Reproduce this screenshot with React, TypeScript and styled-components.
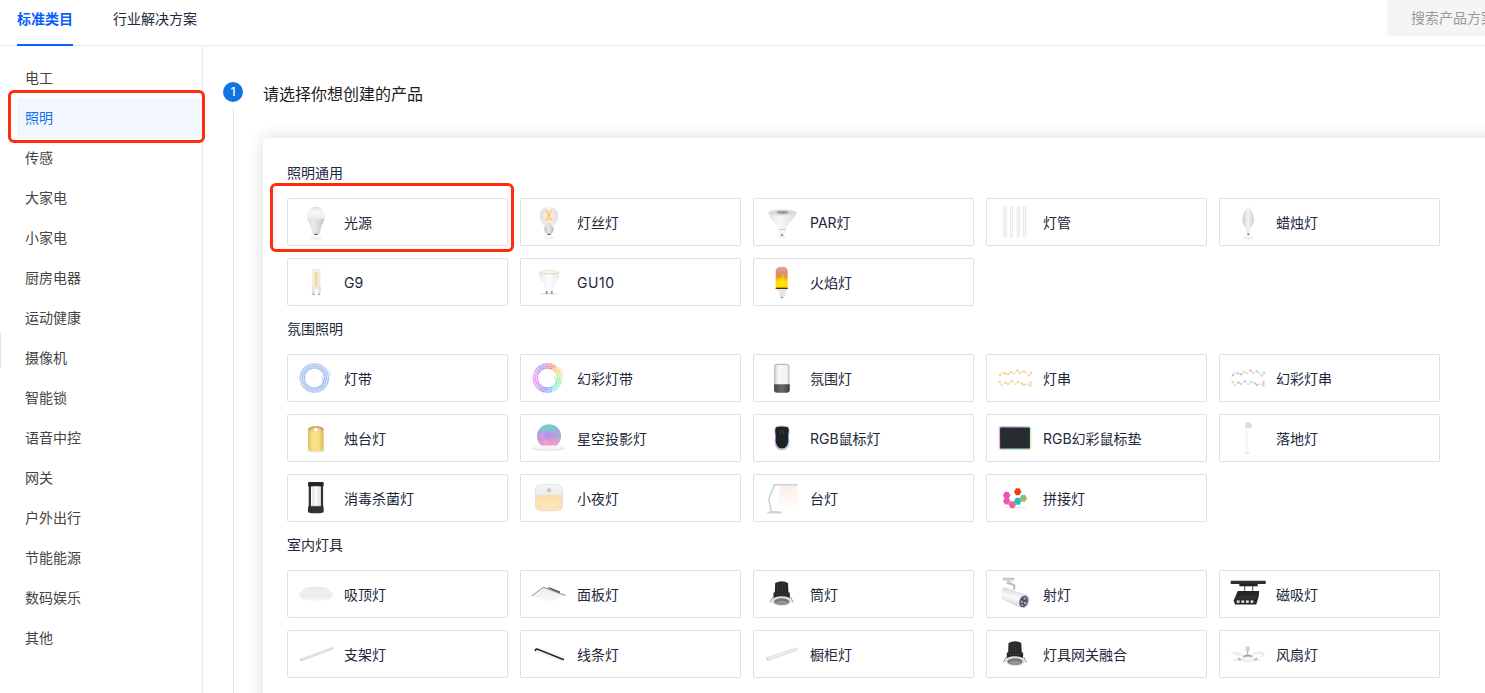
import React from "react";
import styled, { createGlobalStyle, css } from "styled-components";

const GlobalStyle = createGlobalStyle`
  * { box-sizing: border-box; }
  html, body { margin: 0; height: 100%; overflow: hidden; }
  body {
    background: #fff;
    color: #20283a;
    font-family: Inter, "Noto Sans CJK SC", sans-serif;
    font-size: 14px;
    line-height: 22px;
  }
`;

const Page = styled.div`
  position: relative;
  display: flex;
  flex-direction: column;
  height: 693px;
  overflow: hidden;
`;

const Header = styled.header`
  display: flex;
  justify-content: space-between;
  flex: none;
  height: 46px;
  padding-left: 17px;
  border-bottom: 1px solid #ebebeb;
`;

const Tabs = styled.nav`
  display: flex;
  gap: 40px;
`;

const Tab = styled.a<{ $active?: boolean }>`
  height: 46px;
  padding-top: 8px;
  white-space: nowrap;
  ${(p) =>
    p.$active &&
    css`
      color: #0a5cff;
      font-weight: 700;
      border-bottom: 2px solid #0a5cff;
    `}
`;

const Search = styled.div`
  width: 98px;
  height: 36px;
  padding: 7px 0 0 24px;
  overflow: hidden;
  white-space: nowrap;
  color: #999;
  background: #f5f5f5;
  border-bottom-left-radius: 3px;
`;

const Body = styled.div`
  display: flex;
  flex: 1;
  min-height: 0;
`;

const Sidebar = styled.aside`
  flex: none;
  width: 203px;
  padding: 12px 0 0 17px;
  border-right: 1px solid #e9e9eb;
`;

const Category = styled.div<{ $active?: boolean }>`
  position: relative;
  height: 40px;
  padding-left: 8px;
  line-height: 40px;
  color: ${(p) => (p.$active ? "#1274e7" : "#444")};
  background: ${(p) => (p.$active ? "#f1f6ff" : "transparent")};
`;

const Marker = styled.span<{ $inset: string }>`
  position: absolute;
  inset: ${(p) => p.$inset};
  z-index: 2;
  border: 3px solid #ff2b0a;
  border-radius: 6px;
  pointer-events: none;
`;

const DrawerHandle = styled.span`
  position: absolute;
  left: 0;
  top: 332px;
  width: 1px;
  height: 36px;
  background: #e4e5ee;
`;

const Main = styled.main`
  display: flex;
  flex: 1;
  min-width: 0;
  padding: 36px 0 0 20px;
`;

const StepRail = styled.div`
  display: flex;
  flex-direction: column;
  align-items: center;
  gap: 6px;
  flex: none;
  width: 20px;
  margin-right: 20px;
`;

const StepNumber = styled.span`
  flex: none;
  width: 20px;
  height: 20px;
  border-radius: 50%;
  color: #fff;
  background: #1273e6;
  font-size: 12px;
  font-weight: 500;
  line-height: 20px;
  text-align: center;
`;

const StepLine = styled.span`
  flex: 1;
  width: 1px;
  margin-left: 1px;
  background: #e6e6e8;
`;

const StepContent = styled.div`
  flex: none;
  width: 1240px;
`;

const StepTitle = styled.h1`
  margin: 0 0 32px;
  font-size: 16px;
  font-weight: 400;
  line-height: 24px;
  color: #1c1c1e;
`;

const Panel = styled.section`
  height: 640px;
  padding: 24px;
  border-radius: 4px;
  background: #fff;
  box-shadow: 0 0 16px rgba(0, 0, 0, 0.15);
`;

const Group = styled.div`
  & + & {
    margin-top: 12px;
  }
`;

const GroupTitle = styled.h2`
  margin: 0 0 14px;
  font-size: 14px;
  font-weight: 400;
  line-height: 22px;
`;

const Grid = styled.div`
  display: grid;
  grid-template-columns: repeat(5, 221px);
  grid-auto-rows: 48px;
  gap: 12px;
`;

const Card = styled.div`
  position: relative;
  display: flex;
  align-items: center;
  gap: 10px;
  padding: 0 10px;
  border: 1px solid #dfe0e3;
  border-radius: 2px;
  white-space: nowrap;
`;

const CardLabel = styled.span<{ $spaced?: boolean }>`
  padding-top: 1px;
  letter-spacing: ${(p) => (p.$spaced ? "0.6px" : "normal")};
`;

const Picture = styled.svg`
  flex: none;
  width: 36px;
  height: 36px;
  overflow: visible;
`;

type Stops = [number, string][];
const Gradient = ({ id, stops, x2 = 0, y2 = 1 }: { id: string; stops: Stops; x2?: number; y2?: number }) => (
  <linearGradient id={id} x1="0" y1="0" x2={x2} y2={y2}>
    {stops.map(([o, c]) => (
      <stop key={o} offset={o} stopColor={c} />
    ))}
  </linearGradient>
);

const Bulb = () => (
  <>
    <Gradient id="bulb" x2={1} y2={0} stops={[[0, "#dcdcdc"], [0.35, "#e9e9e9"], [0.7, "#d6d6d6"], [1, "#c0c0c0"]]} />
    <Gradient id="bulbTop" stops={[[0, "#dedede"], [0.45, "#f8f8f8"], [1, "#e8e8e8"]]} />
    <ellipse cx="18" cy="34" rx="6" ry="1.8" fill="#f1f1f1" />
    <path d="M9.200 14C9.800 18.500 13.500 21 13.900 28.500L15.500 30h5l1.600-1.500C22.500 21 26.200 18.500 26.800 14Z" fill="url(#bulb)" />
    <path d="M9.200 15C8 7.500 12.500 2.700 18 2.700S28 7.500 26.800 15Q18 15.600 9.200 15Z" fill="url(#bulbTop)" />
    <path d="M15.800 29.700h4.400l-.8 1.400h-2.800z" fill="#6d6d6d" />
  </>
);

const Filament = () => (
  <>
    <Gradient id="glass" x2={1} y2={0} stops={[[0, "#e3ddd8"], [0.5, "#fbf5ec"], [1, "#e3dedb"]]} />
    <Gradient id="filBase" x2={1} y2={0} stops={[[0, "#bcbcbc"], [0.45, "#e9e9e9"], [1, "#b8b8b8"]]} />
    <ellipse cx="18" cy="34" rx="6" ry="1.500" fill="#f3f3f3" />
    <path d="M8.800 12C8.800 6.200 12.500 2.700 18 2.700s9.200 3.500 9.200 9.300c0 5.500-4.200 8-5 13H13.800C13 20 8.800 17.500 8.800 12Z" fill="url(#glass)" />
    <path d="M15.800 18h3.600l1 4 2.300 1.700-.5 4L20.300 30h-4.600l-1.900-2.300-.5-4 2.300-1.700z" fill="url(#filBase)" />
    <path d="m14.300 5.500 7 11.500m0-11.500-7 11.500M16.700 6.500l.4 10M19.300 6.500l-.5 10" stroke="#f5cc7c" strokeWidth="1.300" fill="none" />
    <path d="M16 29.700h4l-.6 1.300h-2.800z" fill="#666" />
  </>
);

const Par = () => (
  <>
    <Gradient id="par" x2={1} y2={0} stops={[[0, "#e2e2e2"], [0.4, "#f8f8f8"], [1, "#dedede"]]} />
    <ellipse cx="18" cy="32.800" rx="4" ry="1.400" fill="#f0f0f0" />
    <path d="M4.300 9C6.500 16 13 19 14.500 25v4l2 2h3l2-2v-4C23.500 19 30.500 16 32.700 9Z" fill="url(#par)" />
    <ellipse cx="18.500" cy="8.500" rx="14.200" ry="2.900" fill="#dadada" />
    <ellipse cx="18.500" cy="8.300" rx="6" ry="1.600" fill="#9b9b9b" />
    <path d="M14.500 25.500h7" stroke="#cfcfcf" />
    <path d="M16.500 30.300h3l-.7 1.700h-1.600z" fill="#8c8c8c" />
  </>
);

const Tubes = () => (
  <>
    <Gradient id="tube" x2={1} y2={0} stops={[[0, "#dcdcdc"], [0.45, "#fafafa"], [1, "#dfdfdf"]]} />
    {[6.600, 13, 19.800, 26.100].map((x) => (
      <rect key={x} x={x} y="1.700" width="2.900" height="32" rx="1.200" fill="url(#tube)" />
    ))}
  </>
);

const CandleBulb = () => (
  <>
    <Gradient id="candle" x2={1} y2={0} stops={[[0, "#cfcfcf"], [0.5, "#f4f4f4"], [1, "#cdcdcd"]]} />
    <ellipse cx="18" cy="34" rx="4.500" ry="1.500" fill="#efefef" />
    <path d="M18.300 2.700C15.500 5 12.300 10.500 12.300 15.500c0 4 2 6.500 3.500 9l.8 5h3.200l.7-5c1.500-2.500 3.500-5 3.500-9 0-5-3-10.500-5.700-12.800Z" fill="url(#candle)" />
    <path d="M17 29.500h2.600L19 31.300h-1.200z" fill="#777" />
  </>
);

const G9 = () => (
  <>
    <rect x="14.700" y="5.300" width="7.300" height="17" rx="0.500" fill="#eee" stroke="#dedede" strokeWidth="0.500" />
    <rect x="16.400" y="7.600" width="3.900" height="14" fill="#fbe9be" />
    <path d="M18.300 8v14" stroke="#f5cd7a" strokeWidth="2.200" strokeDasharray="1.300 .8" />
    <path d="M13.200 22.300h10.200L22.600 30h-8.200z" fill="#e6e6e6" />
    <path d="M17 25h3v5.200h-3z" fill="#fff" />
    <path d="M14.500 29.500q0 1.500 2 1M22 29.500q0 1.500-2 1" stroke="#888" fill="none" />
  </>
);

const Gu10 = () => (
  <>
    <Gradient id="gu" x2={1} y2={0} stops={[[0, "#ececec"], [0.5, "#fcfcfc"], [1, "#e9e9e9"]]} />
    <ellipse cx="18" cy="30" rx="10" ry="1" fill="#ececec" />
    <path d="M7.700 9C8 14 10 17.500 13 19v6.500q5 2 10.600 0V19c3-1.500 4.600-5 4.900-10Z" fill="url(#gu)" />
    <ellipse cx="18.100" cy="8.300" rx="10.400" ry="2.300" fill="#d6d5d2" />
    <ellipse cx="18.100" cy="8" rx="9.500" ry="1.600" fill="#fdf3dc" />
    <path d="M15.800 27v3M20.700 27v3" stroke="#999" strokeWidth="1.900" />
  </>
);

const Flame = () => (
  <>
    <Gradient id="flame" stops={[[0, "#d9aba4"], [0.3, "#d98d6f"], [0.5, "#ef9a2c"], [0.7, "#ffe100"], [0.92, "#ffd500"], [1, "#f3a300"]]} />
    <path d="M12.500 25h11l-2 3.500v3.500l-2 2h-2l-2.200-2v-3.500z" fill="#e6e6e6" />
    <path d="M11.700 24.500V7q0-4.300 6-4.300t6 4.300v17.500z" fill="url(#flame)" />
    <path d="M13.300 22c-1-5 3-6 2.500-9 1 1.500 1.200 2.500 1.300 3.500.8-2 .8-4.500.4-8 2.500 3 2.200 5.500 2.700 8 .9-1 .6-2 .8-3 1.500 4 2 6 1.200 8.500z" fill="#ffe715" opacity=".6" />
    <path d="M11.700 23.700h12v1.400h-12z" fill="#6d2b08" />
    <path d="M16.500 33h2.600l-.6 1.300h-1.400z" fill="#888" />
  </>
);

const blueRing = ["#8fb2f0"];
const rainbowRing = ["#f5786f", "#f9bd68", "#c5ec8b", "#86eba9", "#7be9d3", "#6fa8f5", "#7f7ff5", "#c985f5", "#f173f2", "#ea88f5", "#9f8af0", "#c27fcb"];
const Ring = ({ colors }: { colors: string[] }) => (
  <>
    {Array.from({ length: 44 }, (_, i) => {
      const a = (i / 44) * Math.PI * 2 - Math.PI / 2;
      const c = colors[Math.floor((i / 44) * colors.length)];
      const at = (r: number, t: number) => `${16.400 + Math.cos(t) * r} ${18 + Math.sin(t) * r}`;
      return (
        <g key={i} stroke={c}>
          <path d={`M${at(9.700, a)}L${at(14.900, a + 0.160)}`} strokeWidth="2" opacity=".28" />
          <path d={`M${at(9.400, a)}L${at(15.400, a + 0.160)}`} strokeWidth="1.100" strokeDasharray="1.200 1" />
        </g>
      );
    })}
    <path d="M25 23.500q.4-4.500-1.500-7.500" stroke={colors[colors.length > 1 ? 4 : 0]} fill="none" opacity=".6" />
    <path d="M32.500 16q-.5-5.500-4.500-9" stroke={colors[colors.length > 1 ? 1 : 0]} fill="none" strokeDasharray="1.500 .8" opacity=".5" />
  </>
);

const AmbientLamp = () => (
  <>
    <Gradient id="amb" x2={1} y2={0} stops={[[0, "#bdbdbd"], [0.25, "#f5f5f5"], [0.8, "#f3f3f3"], [1, "#c2c2c2"]]} />
    <Gradient id="ambBase" x2={1} y2={0} stops={[[0, "#474747"], [0.5, "#6a6a6a"], [1, "#3d3d3d"]]} />
    <rect x="10" y="4" width="15.700" height="28" rx="3" fill="url(#amb)" />
    <path d="M11 5.600q1-1.300 3-1.300h7.700q2 0 3 1.300" stroke="#aaa" fill="none" />
    <path d="M10 24.300h15.700v5.400q0 3-3 3H13q-3 0-3-3z" fill="url(#ambBase)" />
  </>
);

const topString: [number, number][] = [[3, 15], [5, 12.500], [8, 13.300], [11, 14.200], [14, 12], [17, 13.500], [20.500, 10.500], [23, 13], [27, 11.500], [29, 13], [32, 15.500], [34, 12.800]];
const bottomString: [number, number][] = [[2.600, 22], [4.500, 25.500], [8.500, 22.500], [11, 24], [15, 21.200], [18, 24.500], [21, 22], [25, 23.500], [27, 25], [30, 24], [33.500, 25.500], [33.500, 22.500]];
const StringLights = ({ colors }: { colors: string[] }) => (
  <>
    {[topString, bottomString].map((pts, row) => (
      <g key={row}>
        <polyline points={pts.map((p) => p.join(",")).join(" ")} fill="none" stroke="#d9d9dc" strokeWidth=".8" />
        {pts.map(([x, y], i) => (
          <circle key={i} cx={x} cy={y} r={i % 4 === 1 ? 0.700 : 1.200} fill={colors[(i + row) % colors.length]} />
        ))}
      </g>
    ))}
  </>
);

const CandleStand = () => (
  <>
    <Gradient id="wax" x2={1} y2={0} stops={[[0, "#e0bd63"], [0.3, "#fae28a"], [0.7, "#f8dd7c"], [1, "#dab65f"]]} />
    <ellipse cx="18" cy="31" rx="9" ry="1.300" fill="#e8e4d8" />
    <path d="M10 8.500v20.500q0 2 7.800 2t7.900-2V8.500z" fill="url(#wax)" />
    <ellipse cx="17.850" cy="9" rx="7.800" ry="3" fill="#cfa96c" />
    <ellipse cx="17.850" cy="10.200" rx="5.500" ry="2.100" fill="#f0d48a" />
    <path d="M17.800 7q-2.800 3.500-1.200 4.600h2.600q1.500-1.100-1.400-4.600z" fill="#fffdf0" />
  </>
);

const StarSphere = () => (
  <>
    <clipPath id="ballClip"><circle cx="18" cy="16.200" r="12" /></clipPath>
    <Gradient id="ball" x2={0.300} y2={1} stops={[[0, "#8bcfc5"], [0.35, "#8fb1dc"], [0.65, "#c094ea"], [1, "#ee9bc7"]]} />
    <ellipse cx="17.500" cy="28.500" rx="16.200" ry="2.300" fill="#e6e6e6" />
    <ellipse cx="17.500" cy="27" rx="15.500" ry="2.600" fill="#f6f6f6" />
    <g clipPath="url(#ballClip)">
      <path d="M4 3h28v22.500H4z" fill="url(#ball)" />
      <path d="m6 15 10-3-4 7zM18 23l6-6 5 4z" fill="#dd98dc" opacity=".7" />
      <path d="M10 5h14l-6 6-8 1zM20 5l11 9-11-1zM25 16l6 0-5 6z" fill="#74d1c2" opacity=".7" />
      <path d="m13 12 8 2-5 5z" fill="#a896ea" opacity=".7" />
      <path d="m10 22 6-3 4 6z" fill="#f2a4ba" opacity=".8" />
    </g>
  </>
);

const Mouse = () => (
  <>
    <Gradient id="glow" x2={1} y2={0.200} stops={[[0, "#d98ff6"], [0.35, "#ffa3a3"], [0.7, "#ffd08f"], [1, "#9be8d0"]]} />
    <path d="M12 6q6-1.300 12.200 0 1.800 2 1.300 6.500-.6 3-.2 7Q25.200 30 18 30t-7.300-10.500q.4-4-.2-7Q10 8 12 6z" fill="url(#glow)" opacity=".75" />
    <path d="M10.900 20q.3 9.700 7.100 9.700T25.100 20" stroke="#a4a9fb" strokeWidth="1.300" fill="none" opacity=".7" />
    <path d="M12.200 7.200q5.800-1.400 11.700 0 1.300 1.800.7 5.500-.6 3-.2 6.800Q24.300 28.500 18 28.500t-6.400-9q.4-3.800-.2-6.800-.5-3.700.8-5.500z" fill="#1d2226" />
    <path d="M16.300 14.500v-3.300q1.700-1 3.400 0v3.300" stroke="#2f5a34" strokeWidth=".8" fill="none" />
  </>
);

const MousePad = () => (
  <>
    <Gradient id="padGlow" x2={1} y2={0.600} stops={[[0, "#b58cf0"], [0.35, "#e09cc8"], [0.7, "#9ed8d8"], [1, "#a7ee8d"]]} />
    <rect x="1.700" y="6" width="32.600" height="24" rx="2.400" fill="url(#padGlow)" opacity=".5" />
    <rect x="2.300" y="6.600" width="31.400" height="22.900" rx="1.900" fill="url(#padGlow)" opacity=".7" />
    <rect x="3.100" y="7.400" width="29.800" height="21.200" rx="1.200" fill="#262c30" />
  </>
);

const FloorLamp = () => (
  <>
    <path d="M16.800 6v26.500" stroke="#e6e6e6" strokeWidth=".9" />
    <path d="M15 7.500V4q.3-2 3-2 2.500 0 3 2l1 2-4 1.800z" fill="#dedede" />
    <path d="m18 7.800 4-2-.5 1.500-2.500 1z" fill="#eec9a9" />
    <ellipse cx="17" cy="33" rx="3" ry=".8" fill="#e0e0e0" />
  </>
);

const Sterilizer = () => (
  <>
    <Gradient id="uv" x2={1} y2={0} stops={[[0, "#d8d8d8"], [0.5, "#fff"], [1, "#dadada"]]} />
    <rect x="10" y="2" width="15.700" height="4.400" rx="1" fill="#26272a" />
    <path d="M10.700 6h2.300v21h-2.300zM22.800 6h2.300v21h-2.300z" fill="#333" />
    <rect x="14.500" y="6.400" width="6.900" height="20" fill="url(#uv)" />
    <path d="M10.500 26h14.800l.4 2v3.800q-.4 1.500-7.900 1.500T10 31.800V28z" fill="#303133" />
    <path d="M13 26.300h9.800" stroke="#707070" strokeWidth=".8" />
  </>
);

const NightLight = () => (
  <>
    <Gradient id="night" stops={[[0, "#f4f4f4"], [0.4, "#ececec"], [0.405, "#fadfae"], [1, "#fde3b4"]]} />
    <rect x="4" y="4.300" width="28" height="27" rx="6" fill="#dedfe2" />
    <rect x="5" y="5" width="26" height="25.400" rx="5" fill="url(#night)" />
    <ellipse cx="18" cy="24" rx="9" ry="4" fill="#ffebc6" opacity=".4" />
    <circle cx="18" cy="10.300" r="2.200" fill="#cfcfcf" />
    <circle cx="18" cy="10.300" r="1" fill="#bbb" />
  </>
);

const DeskLamp = () => (
  <>
    <Gradient id="beam" stops={[[0, "#fdeee5"], [1, "#fffdfc"]]} />
    <path d="M16.500 5.800H33l2.500 21H12z" fill="url(#beam)" />
    <path d="M9.300 4.800H33.700" stroke="#cbd1d2" strokeWidth="1.600" />
    <path d="M10.300 5 4.800 19l2.400 12.500" stroke="#cdd2d3" strokeWidth="1.600" fill="none" />
    <ellipse cx="10.700" cy="32.300" rx="8" ry="1.300" fill="#cdd1d1" />
  </>
);

const hexes: [number, number, string][] = [[9.700, 15.300, "#ef4db4"], [20.700, 11.700, "#ee3d13"], [9.700, 21, "#ef55b7"], [15.300, 24.700, "#f05f9c"], [20.700, 21.300, "#25bdb7"], [26.300, 18.300, "#90bd73"]];
const HexLights = () => (
  <>
    <ellipse cx="18" cy="27.500" rx="12" ry=".9" fill="#ececec" />
    {hexes.map(([x, y, c]) => (
      <path key={`${x}-${y}`} transform={`translate(${x} ${y})`} d="M-1.700-3.200h3.400L3.500 0 1.700 3.200h-3.400L-3.500 0z" fill={c} stroke={c} strokeWidth=".4" strokeLinejoin="round" />
    ))}
  </>
);

const CeilingLamp = () => (
  <>
    <Gradient id="ceil" stops={[[0, "#ececed"], [0.45, "#f1f1f2"], [0.5, "#e8e9ea"], [1, "#fafafa"]]} />
    <ellipse cx="18" cy="14" rx="13" ry="3.400" fill="#ebebec" />
    <ellipse cx="18" cy="18.700" rx="17" ry="6.800" fill="url(#ceil)" />
  </>
);

const PanelLamp = () => (
  <>
    <Gradient id="pan" stops={[[0, "#ececec"], [1, "#fafafa"]]} />
    <path d="m1 20 11.500-8.500 22 8L19.500 26z" fill="url(#pan)" />
    <path d="M.7 20 12.300 11.300l22.400 8.200" fill="none" stroke="#85827f" strokeWidth=".9" />
    <path d="m16 11.800 3-.4 10 4 0 1.800z" fill="#55524f" />
  </>
);

const Downlight = ({ shift = 0 }: { shift?: number }) => (
  <g transform={`translate(${shift} 0)`}>
    <path d="M9 21 6 26.500M26.500 21l2.800 5.500" stroke="#888" strokeWidth=".9" />
    <path d="M11.200 7q6.500-3.400 12.800 0l.4 9 1.500 1-.2 6H9.600l-.2-6 1.500-1z" fill="#262626" />
    <path d="M13.500 7v9M16 6.500v9.500M18.500 6.500v9.500M21 6.500v9.500" stroke="#444" strokeWidth=".6" />
    <path d="M10 17.500q7.500 1.500 15.500 0" stroke="#444" strokeWidth=".7" fill="none" />
    <ellipse cx="17.700" cy="25" rx="10" ry="4.800" fill="#dedede" />
    <ellipse cx="17.700" cy="25.700" rx="7.500" ry="3.400" fill="#777" />
    <ellipse cx="17.700" cy="26.800" rx="5.500" ry="2.100" fill="#949494" />
  </g>
);

const SpotLight = () => (
  <>
    <Gradient id="spot" x2={-0.300} y2={1} stops={[[0, "#ddd"], [0.3, "#fafafa"], [1, "#b9b9b9"]]} />
    <path d="M5.300 2.300h12v2.400H14l-.5 2.500h-4V4.700H6z" fill="#d3d3d3" />
    <path d="M6 2.300h11" stroke="#a5a5a5" strokeWidth=".7" />
    <path d="M10 6.500h3l5.300 2v5h-2.200v-3.800L10 8z" fill="#bdbdbd" />
    <path d="M8.500 11.500 29 18.800 24.500 32Q14 28 5.500 23.500 3 19.500 4.300 14.500 5.500 11.500 8.500 11.500z" fill="url(#spot)" />
    <ellipse cx="27.200" cy="25.300" rx="5" ry="6.800" transform="rotate(18 27.200 25.300)" fill="#c4c4c4" />
    <ellipse cx="26.600" cy="25.500" rx="4" ry="5.700" transform="rotate(18 26.600 25.500)" fill="#48505f" />
    <g fill="#9fb0c9"><circle cx="27.700" cy="22.500" r="1.300" /><circle cx="24.800" cy="25.800" r="1.200" /><circle cx="28" cy="27" r="1.300" /><circle cx="25.300" cy="29" r="1" /></g>
  </>
);

const MagneticLamp = () => (
  <>
    <path d="M.7 4.700h35v3.400H.7z" fill="#2e2e30" />
    <path d="M9.300 8h18.400v2.300H9.300z" fill="#242425" />
    <path d="M14.700 10v5.500M22.700 10v5.500" stroke="#444" strokeWidth=".9" />
    <path d="M7.700 15h21.500l-.5 5.500-2.500 8H5L3.700 24.500z" fill="#252527" />
    <path d="m6.500 19.500-1.800 4h21.600l1.800-4" fill="#303032" />
    {[6.700, 11.300, 15.900, 20.500].map((x) => (
      <rect key={x} x={x} y="24.400" width="2.900" height="2.500" fill="#e8dcca" />
    ))}
  </>
);

const BarLamp = () => (
  <>
    <path d="M3.300 23.700 34 12.500" stroke="#d9d9d9" strokeWidth="2.600" strokeLinecap="round" />
    <path d="M4 23 33.600 12.200" stroke="#e9e9e9" strokeWidth="1.200" />
    <circle cx="3.300" cy="23.800" r="1.100" fill="#c6c6c6" />
  </>
);

const LineLamp = () => (
  <>
    <path d="m4 15 27 9.500" stroke="#ebebeb" strokeWidth="1" />
    <path d="M4.400 14.500q.3-1.700 2.300-1.200L32.300 23.500" stroke="#262626" strokeWidth="1.700" strokeLinecap="round" fill="none" />
  </>
);

const CabinetLamp = () => (
  <>
    <path d="m2.500 21.300 29.800-9.800 1.700 1-.3 2L4 25l-1.400-.8z" fill="#dcdcdc" />
    <path d="m3.500 21.700 29-9.500.3 1.700-28.500 9.800z" fill="#ededed" />
    <path d="m2.700 21.500 1.700 3" stroke="#c3c3c3" strokeWidth=".9" />
  </>
);

const FanLamp = () => (
  <>
    <ellipse cx="17" cy="23.700" rx="14" ry="2.200" fill="#efefef" />
    <path d="M0 16.500q5-1.500 9 0l6 3.500q-9 .5-15-3.500zM21 20q2-4.300 8-4.500 5.500.3 6 3-1.500 3-7 3.300 4.500-2 3.500-3.800-4-.5-10.500 2z" fill="#ececec" />
    <path d="M15.800 10.500h3.800v4l-1 1h-1.800l-1-1z" fill="#cbcbcb" />
    <path d="M17.700 15v4" stroke="#999" strokeWidth=".8" />
    <path d="M12.500 21.500q1-3 5.200-3t5.200 3z" fill="#a2a2a2" />
    <path d="M9 21.700v2h2M26.300 21.700v2h-2" stroke="#999" fill="none" />
    <ellipse cx="17.700" cy="22.800" rx="6.500" ry="2" fill="#f8f8f8" stroke="#ddd" strokeWidth=".4" />
  </>
);

const categories = ["电工", "照明", "传感", "大家电", "小家电", "厨房电器", "运动健康", "摄像机", "智能锁", "语音中控", "网关", "户外出行", "节能能源", "数码娱乐", "其他"];
const activeCategory = "照明";

type Product = { name: string; art: React.ReactNode; marked?: boolean; spaced?: boolean };
const groups: { title: string; products: Product[] }[] = [
  {
    title: "照明通用",
    products: [
      { name: "光源", art: <Bulb />, marked: true },
      { name: "灯丝灯", art: <Filament /> },
      { name: "PAR灯", art: <Par /> },
      { name: "灯管", art: <Tubes /> },
      { name: "蜡烛灯", art: <CandleBulb /> },
      { name: "G9", art: <G9 /> },
      { name: "GU10", art: <Gu10 />, spaced: true },
      { name: "火焰灯", art: <Flame /> },
    ],
  },
  {
    title: "氛围照明",
    products: [
      { name: "灯带", art: <Ring colors={blueRing} /> },
      { name: "幻彩灯带", art: <Ring colors={rainbowRing} /> },
      { name: "氛围灯", art: <AmbientLamp /> },
      { name: "灯串", art: <StringLights colors={["#fbd280", "#f8d592"]} /> },
      { name: "幻彩灯串", art: <StringLights colors={["#f8b0b0", "#b4eeac", "#aed3f9"]} /> },
      { name: "烛台灯", art: <CandleStand /> },
      { name: "星空投影灯", art: <StarSphere /> },
      { name: "RGB鼠标灯", art: <Mouse /> },
      { name: "RGB幻彩鼠标垫", art: <MousePad /> },
      { name: "落地灯", art: <FloorLamp /> },
      { name: "消毒杀菌灯", art: <Sterilizer /> },
      { name: "小夜灯", art: <NightLight /> },
      { name: "台灯", art: <DeskLamp /> },
      { name: "拼接灯", art: <HexLights /> },
    ],
  },
  {
    title: "室内灯具",
    products: [
      { name: "吸顶灯", art: <CeilingLamp /> },
      { name: "面板灯", art: <PanelLamp /> },
      { name: "筒灯", art: <Downlight /> },
      { name: "射灯", art: <SpotLight /> },
      { name: "磁吸灯", art: <MagneticLamp /> },
      { name: "支架灯", art: <BarLamp /> },
      { name: "线条灯", art: <LineLamp /> },
      { name: "橱柜灯", art: <CabinetLamp /> },
      { name: "灯具网关融合", art: <Downlight shift={0.300} /> },
      { name: "风扇灯", art: <FanLamp /> },
    ],
  },
];

export default function App() {
  return (
    <Page>
      <GlobalStyle />
      <Header>
        <Tabs>
          <Tab $active>标准类目</Tab>
          <Tab>行业解决方案</Tab>
        </Tabs>
        <Search>搜索产品方案</Search>
      </Header>
      <Body>
        <Sidebar>
          {categories.map((name) => (
            <Category key={name} $active={name === activeCategory}>
              {name}
              {name === activeCategory && <Marker $inset="-8px -3px -5px -9px" />}
            </Category>
          ))}
        </Sidebar>
        <Main>
          <StepRail>
            <StepNumber>1</StepNumber>
            <StepLine />
          </StepRail>
          <StepContent>
            <StepTitle>请选择你想创建的产品</StepTitle>
            <Panel>
              {groups.map((group) => (
                <Group key={group.title}>
                  <GroupTitle>{group.title}</GroupTitle>
                  <Grid>
                    {group.products.map((product) => (
                      <Card key={product.name}>
                        <Picture viewBox="0 0 36 36">{product.art}</Picture>
                        <CardLabel $spaced={product.spaced}>{product.name}</CardLabel>
                        {product.marked && <Marker $inset="-16px -7px -7px -18px" />}
                      </Card>
                    ))}
                  </Grid>
                </Group>
              ))}
            </Panel>
          </StepContent>
        </Main>
      </Body>
      <DrawerHandle />
    </Page>
  );
}
